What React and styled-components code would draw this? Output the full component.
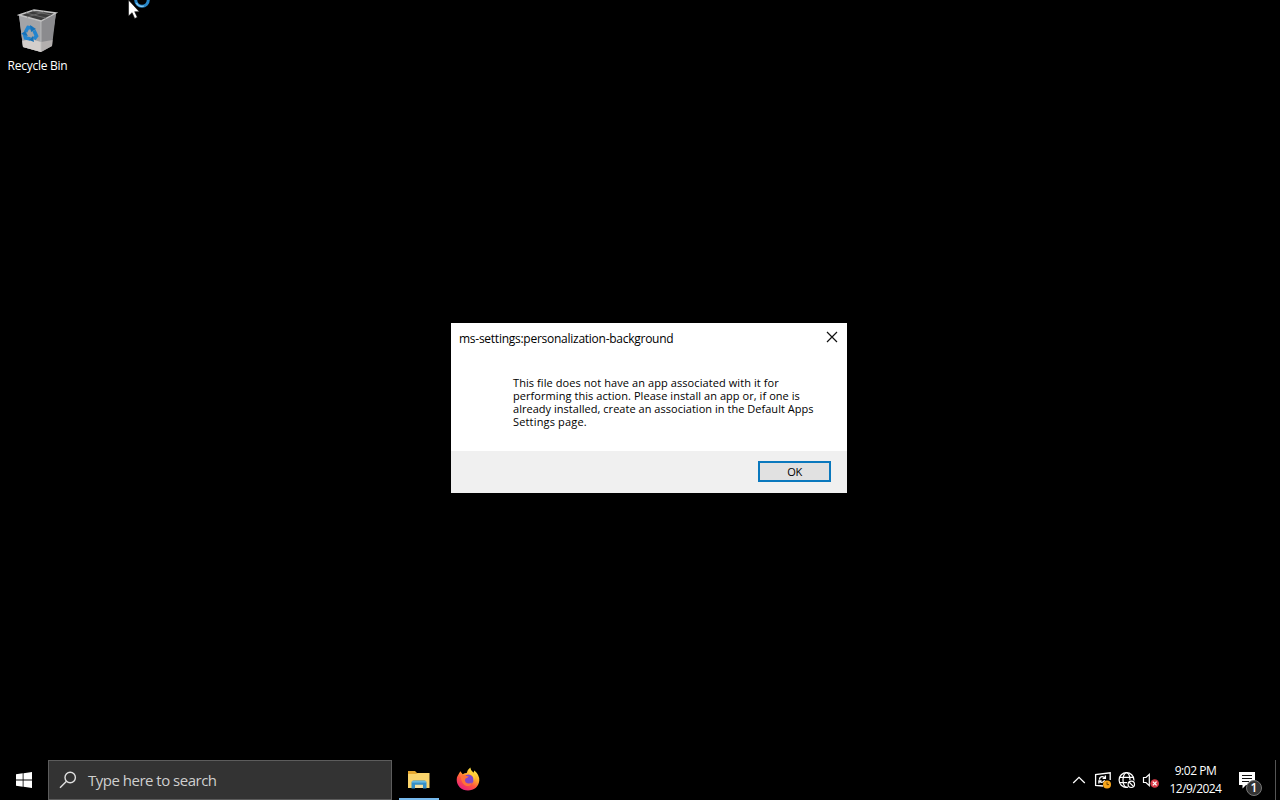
import React from "react";
import styled, { createGlobalStyle } from "styled-components";

const GlobalStyle = createGlobalStyle`
  *, *::before, *::after { box-sizing: border-box; }
  body { margin: 0; background: #000; font-family: "Open Sans", "Noto Sans", sans-serif; }
  svg { display: block; flex: none; }
`;

const Screen = styled.div`
  position: relative;
  display: flex;
  flex-direction: column;
  width: 1280px;
  height: 800px;
  overflow: hidden;
  background: #000;
  color: #fff;
`;

const Desktop = styled.main`
  flex: 1;
  padding-top: 7px;
`;

const Shortcut = styled.div`
  display: flex;
  flex-direction: column;
  align-items: center;
  gap: 5px;
  width: 75px;
`;

const Label = styled.span`
  font-size: 12px;
  line-height: 16px;
  letter-spacing: ${(p) => p.$spacing || "0"};
  white-space: nowrap;
`;

const Pointer = styled.div`
  position: absolute;
  left: 128px;
  top: 0;
`;

const Dialog = styled.section`
  position: absolute;
  left: 451px;
  top: 323px;
  width: 396px;
  height: 170px;
  display: flex;
  flex-direction: column;
  background: #fff;
  color: #000;
`;

const TitleBar = styled.header`
  display: flex;
  align-items: flex-start;
  justify-content: space-between;
  height: 30px;
  padding: 8px 9px 0 8px;
`;

const CloseButton = styled.button`
  border: 0;
  padding: 0;
  background: none;
`;

const Message = styled.div`
  flex: 1;
  padding: 23px 0 0 62px;
  font-size: 11px;
  line-height: 13px;
  white-space: nowrap;
`;

const Line = styled.div`
  letter-spacing: ${(p) => p.$spacing};
`;

const Footer = styled.footer`
  display: flex;
  justify-content: flex-end;
  height: 42px;
  padding: 10px 16px 0 0;
  background: #f0f0f0;
`;

const OkButton = styled.button`
  width: 73px;
  height: 21px;
  padding: 0;
  border: 2px solid #0a78bd;
  background: #e1e1e1;
  color: #000;
  font: 11px/17px "Open Sans", "Noto Sans", sans-serif;
  letter-spacing: -0.3px;
`;

const Taskbar = styled.nav`
  display: flex;
  height: 40px;
  background: #000;
`;

const StartButton = styled.div`
  display: flex;
  align-items: center;
  justify-content: center;
  width: 48px;
`;

const SearchBox = styled.div`
  display: flex;
  align-items: center;
  gap: 11px;
  width: 344px;
  padding-left: 10px;
  border: 1px solid #5c5c5c;
  background: #333;
  color: #cfcfcf;
  font-size: 15px;
  letter-spacing: -0.5px;
`;

const Apps = styled.div`
  display: flex;
  gap: 9px;
  padding-left: 7px;
`;

const AppButton = styled.div`
  display: flex;
  align-items: center;
  justify-content: center;
  width: 40px;
  border-bottom: 2px solid ${(p) => (p.$running ? "#76b9ed" : "transparent")};
`;

const Tray = styled.div`
  display: flex;
  align-items: center;
  margin-left: auto;
`;

const TrayIcon = styled.div`
  display: flex;
  justify-content: center;
  width: 24px;
`;

const Clock = styled.div`
  width: 65px;
  display: flex;
  flex-direction: column;
  align-items: center;
  gap: 2px;
`;

const Notifications = styled.div`
  position: relative;
  width: 47px;
  height: 40px;
  padding: 12px 0 0 11px;
`;

const Badge = styled.span`
  position: absolute;
  left: 18px;
  top: 20px;
  width: 16px;
  height: 16px;
  border: 1px solid #777;
  border-radius: 50%;
  background: #333;
  font-size: 12px;
  font-weight: 600;
  line-height: 13px;
  text-align: center;
`;

const ShowDesktop = styled.div`
  width: 5px;
  height: 40px;
  border-left: 1px solid #555;
`;

const RecycleBin = () => (
  <svg width="42" height="46" viewBox="0 0 42 46">
    <path d="M2 8 24 14 39 6 34 38 24 45 6 40Z" fill="#a9a9ab" />
    <path d="M24 14 39 6 35 39 24 45Z" fill="#8b8b8e" />
    <path d="M2 8 24 14 24 45 6 40Z" fill="#a3a4a7" />
    <path d="M5.3 34 14 32 24 35 24 45 6 40Z" fill="#d3cecb" />
    <path d="M24 35 35.5 33 35 39 24 45Z" fill="#b3afae" />
    <path d="M2 8 17 3 39 6 24 14Z" fill="#3c3c3c" stroke="#c4c4c4" strokeWidth="1.4" />
    <path d="M9 6 29 11M15 4 34 8M10 10 27 5" stroke="#686868" fill="none" />
    <path d="M24 14V44" stroke="#c0c0c0" strokeWidth=".8" />
    <g fill="none" stroke="#2385cf" strokeWidth="3.6">
      <path d="M8.5 25 11 20.5 15 21" />
      <path d="M17 23.5 19.5 29 17 32" />
      <path d="M13.5 32 8.5 31 7.5 27" />
    </g>
    <path d="m13 18 6 4-5 3ZM16 29l-4 4 5 2ZM4 27l4-3 3 5Z" fill="#1672b8" />
  </svg>
);

const BusyPointer = () => (
  <svg width="24" height="21" viewBox="0 0 24 21">
    <circle cx="14" cy="0" r="6.3" fill="none" stroke="#2787c9" strokeWidth="3" />
    <path d="M8.4 3A6.3 6.3 0 0 0 16 6" fill="none" stroke="#86c9f1" strokeWidth="1.3" />
    <path d="M.5 0V16L4.1 12.7 6.7 18.5 9.3 17.3 6.7 11.7H11.3Z" fill="#fff" stroke="#111" strokeWidth=".6" />
  </svg>
);

const CloseIcon = () => (
  <svg width="12" height="12" viewBox="0 0 12 12">
    <path d="m1 1 10 10M11 1 1 11" stroke="#111" strokeWidth="1.2" />
  </svg>
);

const WindowsLogo = () => (
  <svg width="16" height="16" viewBox="0 0 16 16" fill="#fff">
    <path d="M0 2.3 6.7 1.3V7.5H0ZM7.5 1.2 16 0V7.5H7.5ZM0 8.4H6.7V14.7L0 13.7ZM7.5 8.4H16V16L7.5 14.8Z" />
  </svg>
);

const SearchIcon = () => (
  <svg width="18" height="18" viewBox="0 0 18 18" fill="none" stroke="#e0e0e0" strokeWidth="1.4">
    <circle cx="11.2" cy="6.5" r="5.2" />
    <path d="M7.5 10.2 1 16.7" />
  </svg>
);

const ExplorerIcon = () => (
  <svg width="22" height="19" viewBox="0 0 22 19">
    <path d="M0 1H7L9 3H21V8H0Z" fill="#e8a930" />
    <path d="M0 4H8L10 3H21.5V18H0Z" fill="#fbd46c" />
    <path d="M3.5 18.5V12.5Q3.5 10.5 5.5 10.5H16.5Q18.5 10.5 18.5 12.5V18.5H15V14.8H7V18.5Z" fill="#358fc8" />
    <path d="M4 11H18V12.6H4Z" fill="#69b9df" />
    <path d="M7 15H15V18H7Z" fill="#f5dfa0" />
  </svg>
);

const FirefoxIcon = () => (
  <svg width="24" height="24" viewBox="0 0 24 24">
    <defs>
      <linearGradient id="flame" x1=".8" y1=".05" x2=".25" y2=".95">
        <stop offset="0" stopColor="#fff04a" />
        <stop offset=".35" stopColor="#ffad2c" />
        <stop offset=".65" stopColor="#ff543f" />
        <stop offset="1" stopColor="#e9217d" />
      </linearGradient>
    </defs>
    <path d="M4.3 4.3 6.7 7.2Q8.5 6 10.7 6 11.2 3 14.3.6 14.5 3.7 17.5 5.8L18.4 3.5Q23.6 8 23.3 13.5C22.8 20 17.7 23.5 12 23.5 5.5 23.5.7 18.8.7 12.7.7 9.5 2.2 8.2 3 6.5Z" fill="url(#flame)" />
    <circle cx="12.4" cy="12.7" r="5.2" fill="#8046c9" />
    <path d="M4.5 9Q8 6.8 10.5 9L12.8 9.5Q11.5 11.2 9.6 11.6 8.2 13.2 9.6 15.3 12.6 17.6 16 15.4 15 19.5 10.5 19 5.5 17.5 4.5 9Z" fill="#ff7138" />
    <path d="M13.5 7Q18.5 8.6 17.5 14 20 10 17.5 6L14 3Z" fill="#ffcf38" />
  </svg>
);

const ChevronIcon = () => (
  <svg width="14" height="8" viewBox="0 0 14 8">
    <path d="m1.2 7 5.8-5.6L12.8 7" fill="none" stroke="#fff" strokeWidth="1.3" />
  </svg>
);

const UpdateIcon = () => (
  <svg width="18" height="18" viewBox="0 0 18 18" fill="none" stroke="#fff" strokeWidth="1.3">
    <path d="M9 15 1.6 14.4V3.6L16.2 1.8V9" />
    <path d="M5.4 8.6Q5.6 5.6 8.4 5.6 10 5.6 11 7M11.4 4.4V7.3H8.6" />
    <path d="M10.6 9.2Q9.6 11.4 7.6 11.3 6 11.2 5.4 10M4.9 12.6V9.8H7.6" />
    <circle cx="13" cy="13.4" r="4" fill="#f6a51c" stroke="none" />
    <path d="M13 11.2V13.6H15" stroke="#6b4200" strokeWidth="1" />
  </svg>
);

const GlobeIcon = () => (
  <svg width="18" height="18" viewBox="0 0 18 18" fill="none" stroke="#fff" strokeWidth="1.2">
    <circle cx="8.5" cy="9" r="7.4" />
    <ellipse cx="8.5" cy="9" rx="3.5" ry="7.4" />
    <path d="M1.8 6.3H15.2M1.8 11.7H15.2" />
    <circle cx="13.3" cy="13.3" r="4.5" fill="#000" stroke="none" />
    <circle cx="13.3" cy="13.3" r="3.2" />
    <path d="m11 11 4.6 4.6" />
  </svg>
);

const VolumeIcon = () => (
  <svg width="18" height="18" viewBox="0 0 18 18">
    <path d="M1.5 6.5H4L7.3 3.3V14.7L4 11.5H1.5Z" fill="none" stroke="#fff" strokeWidth="1.2" />
    <circle cx="12.7" cy="12.5" r="4.3" fill="#d83a46" />
    <path d="m10.8 10.6 3.8 3.8M14.6 10.6l-3.8 3.8" stroke="#fff" strokeWidth="1.3" />
  </svg>
);

const NoteIcon = () => (
  <svg width="17" height="17" viewBox="0 0 17 17">
    <path d="M0 0H16V13H7L3.5 16.5V13H0Z" fill="#fff" />
    <path d="M3 3.5H13M3 6.5H13M3 9.5H10" stroke="#111" strokeWidth="1" />
  </svg>
);

export default function App() {
  return (
    <Screen>
      <GlobalStyle />
      <Desktop>
        <Shortcut>
          <RecycleBin />
          <Label $spacing="-0.25px">Recycle Bin</Label>
        </Shortcut>
      </Desktop>

      <Dialog>
        <TitleBar>
          <Label $spacing="-0.26px">ms-settings:personalization-background</Label>
          <CloseButton aria-label="Close"><CloseIcon /></CloseButton>
        </TitleBar>
        <Message>
          <Line $spacing="0.08px">This file does not have an app associated with it for</Line>
          <Line $spacing="0.06px">performing this action. Please install an app or, if one is</Line>
          <Line $spacing="0.03px">already installed, create an association in the Default Apps</Line>
          <Line $spacing="0.16px">Settings page.</Line>
        </Message>
        <Footer><OkButton>OK</OkButton></Footer>
      </Dialog>

      <Taskbar>
        <StartButton><WindowsLogo /></StartButton>
        <SearchBox><SearchIcon />Type here to search</SearchBox>
        <Apps>
          <AppButton $running><ExplorerIcon /></AppButton>
          <AppButton><FirefoxIcon /></AppButton>
        </Apps>
        <Tray>
          <TrayIcon><ChevronIcon /></TrayIcon>
          <TrayIcon><UpdateIcon /></TrayIcon>
          <TrayIcon><GlobeIcon /></TrayIcon>
          <TrayIcon><VolumeIcon /></TrayIcon>
          <Clock>
            <Label $spacing="-0.45px">9:02 PM</Label>
            <Label $spacing="-0.55px">12/9/2024</Label>
          </Clock>
          <Notifications><NoteIcon /><Badge>1</Badge></Notifications>
          <ShowDesktop />
        </Tray>
      </Taskbar>

      <Pointer><BusyPointer /></Pointer>
    </Screen>
  );
}
